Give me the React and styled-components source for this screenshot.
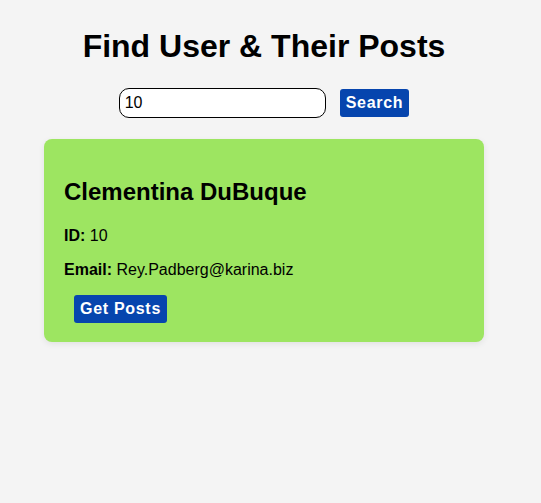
import React, {useState} from 'react';
import styled, {createGlobalStyle} from "styled-components";

const GlobalStyle = createGlobalStyle`
  body {
    margin: 0;
    background: #f4f4f4;
    font-family: "Liberation Sans", Arial, sans-serif;
    color: #000;
  }
`;

const App = () => {
  const [query, setQuery] = useState("10");
  const user = {id: 10, name: "Clementina DuBuque", email: "Rey.Padberg@karina.biz"};

  return (
    <Page>
      <GlobalStyle/>
      <Title>Find User &amp; Their Posts</Title>
      <SearchRow>
        <SearchInput value={query} onChange={e => setQuery(e.target.value)}/>
        <BlueButton>Search</BlueButton>
      </SearchRow>
      <UserCard>
        <UserName>{user.name}</UserName>
        <Field><b>ID:</b> {user.id}</Field>
        <Field><b>Email:</b> {user.email}</Field>
        <BlueButton $indent>Get Posts</BlueButton>
      </UserCard>
    </Page>
  );
};

const Page = styled.div`
  width: 440px;
  padding: 8px 57px 20px 44px;
  display: flex;
  flex-direction: column;
  align-items: center;
`;

const Title = styled.h1`
  font-size: 32px;
  font-weight: bold;
  margin: 20px 0 23px;
  line-height: 37px;
`;

const SearchRow = styled.div`
  display: flex;
  align-items: center;
  gap: 14px;
  margin-bottom: 21px;
`;

const SearchInput = styled.input`
  width: 207px;
  height: 30px;
  box-sizing: border-box;
  border: 1px solid #000;
  border-radius: 10px;
  padding: 0 5px;
  font-size: 16px;
  font-family: "Liberation Sans", Arial, sans-serif;
  background: #fff;
  outline: none;
`;

const BlueButton = styled.button`
  background: #0645ae;
  color: #fff;
  border: none;
  border-radius: 3px;
  font-family: "Liberation Sans", Arial, sans-serif;
  font-size: 16px;
  font-weight: bold;
  letter-spacing: 0.7px;
  padding: 0 6px;
  height: 28px;
  margin-left: ${p => p.$indent ? "10px" : "0"};
  align-self: ${p => p.$indent ? "flex-start" : "auto"};
  cursor: pointer;
`;

const UserCard = styled.div`
  width: 440px;
  box-sizing: border-box;
  background: #9de561;
  border-radius: 8px;
  box-shadow: 0 2px 6px rgba(0, 0, 0, 0.08);
  padding: 20px 20px 19px;
  display: flex;
  flex-direction: column;
`;

const UserName = styled.h2`
  font-size: 24px;
  font-weight: bold;
  margin: 19px 0 21px;
  line-height: 28px;
`;

const Field = styled.p`
  font-size: 16px;
  margin: 0 0 16px;
  line-height: 18px;
`;

export default App;
